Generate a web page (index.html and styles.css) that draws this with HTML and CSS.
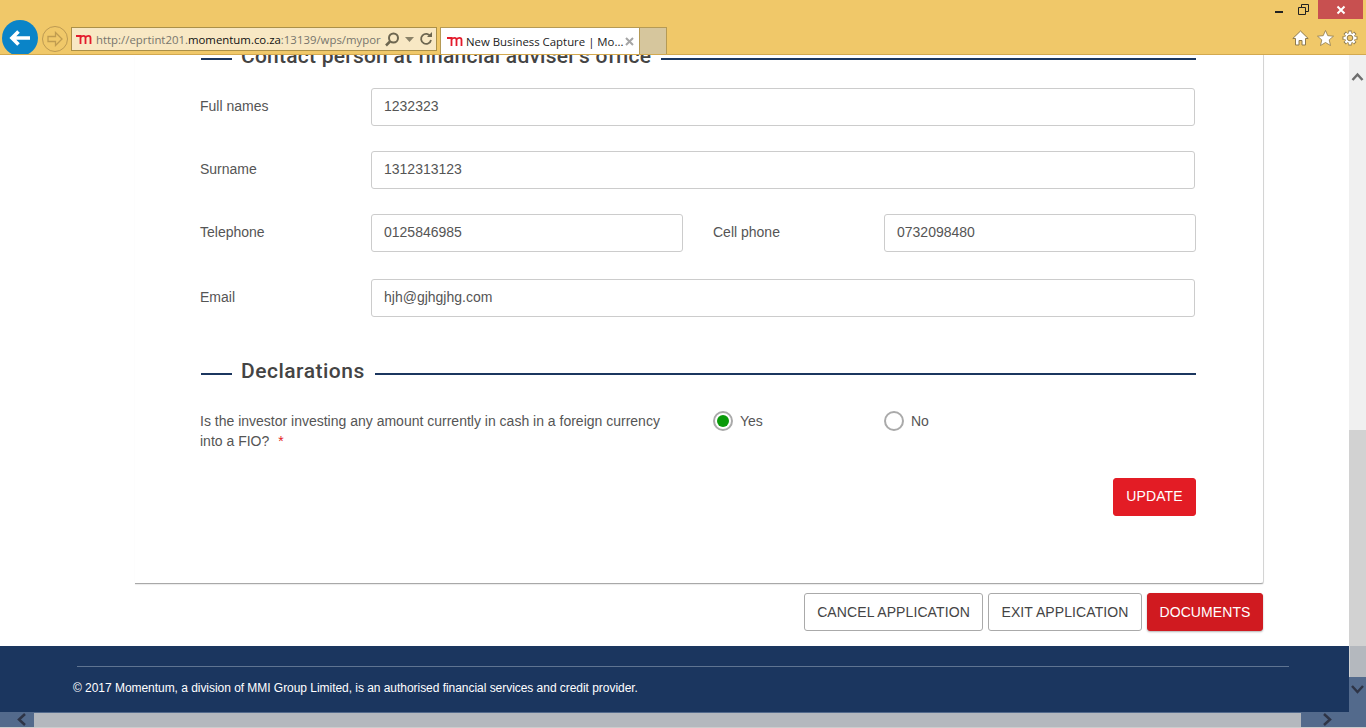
FILE: index.html
```html
<!DOCTYPE html>
<html lang="en">
<head>
<meta charset="utf-8">
<title>New Business Capture | Momentum</title>
<link rel="stylesheet" href="styles.css">
</head>
<body>
<div class="window">
  <header class="chrome">
    <div class="win-controls">
      <span class="win-btn"><svg width="10" height="10" viewBox="0 0 10 10"><rect x="1" y="6" width="8" height="2" fill="#222"/></svg></span>
      <span class="win-btn"><svg width="11" height="11" viewBox="0 0 11 11"><path d="M.5 3.500h7v7h-7zM3.500 3V.5h7v7H8" fill="none" stroke="#222"/></svg></span>
      <span class="win-close"><svg width="10" height="10" viewBox="0 0 10 10"><path d="M1.500 1.500l7 7M8.500 1.500l-7 7" stroke="#fff" stroke-width="2"/></svg></span>
    </div>
    <div class="nav-row">
      <span class="back"><svg width="22" height="16" viewBox="0 0 22 16"><path d="M9.500 1.500L3 8l6.500 6.500M3 8h18" fill="none" stroke="#fff" stroke-width="3.600"/></svg></span>
      <span class="forward"><svg width="18" height="16" viewBox="0 0 18 16"><path d="M9.500 1.500l6.500 6.500-6.500 6.500v-4H2v-5h7.500z" fill="none" stroke="#c09c50" stroke-width="1.300"/></svg></span>
      <div class="address">
        <svg class="logo" width="16" height="10" viewBox="0 0 16 10"><path d="M0 2h4.500v8M4.500 3.500C6 1.500 9.500 1 9.500 4v6M9.500 3.500C11 1.500 14.500 1 14.500 4v6" fill="none" stroke="#e31b2c" stroke-width="1.800"/></svg>
        <span class="url">http://eprtint201.<b>momentum.co.za</b>:13139/wps/mypor</span>
        <svg class="addr-icon" width="15" height="15" viewBox="0 0 15 15"><circle cx="8.500" cy="6" r="4.500" fill="none" stroke="#6d6650" stroke-width="2"/><path d="M5 9.500L1 13.500" stroke="#6d6650" stroke-width="2.500"/></svg>
        <svg class="addr-caret" width="9" height="5" viewBox="0 0 9 5"><path d="M0 0h9L4.500 5z" fill="#8a8268"/></svg>
        <svg class="addr-refresh" width="14" height="14" viewBox="0 0 14 14"><path d="M11.500 4.500A5 5 0 1 0 12 8" fill="none" stroke="#6d6650" stroke-width="1.800"/><path d="M8 5h5V0z" fill="#6d6650"/></svg>
      </div>
      <div class="tab">
        <svg class="logo" width="16" height="10" viewBox="0 0 16 10"><path d="M0 2h4.500v8M4.500 3.500C6 1.500 9.500 1 9.500 4v6M9.500 3.500C11 1.500 14.500 1 14.500 4v6" fill="none" stroke="#e31b2c" stroke-width="1.800"/></svg>
        <span class="tab-title">New Business Capture | Mo...</span>
        <svg width="9" height="9" viewBox="0 0 9 9"><path d="M1 1l7 7M8 1L1 8" stroke="#a5a5a5" stroke-width="2"/></svg>
      </div>
      <div class="new-tab"></div>
      <div class="tools">
        <svg width="17" height="16" viewBox="0 0 17 16"><path d="M8.500 1L.8 8.500H3.500V15h3.500v-4.500h3V15h3.500V8.500h2.700z" fill="#fff" stroke="#8d7a4e"/></svg>
        <svg width="17" height="16" viewBox="0 0 17 16"><path d="M8.500 .5l2.300 5.200 5.700.5-4.300 3.700 1.300 5.600-5-3-5 3 1.300-5.600L.5 6.200l5.700-.5z" fill="#fff" stroke="#8d7a4e" stroke-width=".8"/></svg>
        <svg width="16" height="16" viewBox="0 0 16 16"><path d="M8 .5v15M.5 8h15M2.700 2.700l10.600 10.600M13.300 2.700L2.700 13.300" stroke="#8d7a4e" stroke-width="3.400"/><circle cx="8" cy="8" r="5.500" fill="#8d7a4e"/><path d="M8 1.500v13M1.500 8h13M3.400 3.400l9.200 9.200M12.600 3.400l-9.200 9.200" stroke="#fff" stroke-width="2.400"/><circle cx="8" cy="8" r="4.800" fill="#fff"/><circle cx="8" cy="8" r="2.800" fill="#f0c869" stroke="#8d7a4e"/></svg>
      </div>
    </div>
  </header>

  <div class="viewport">
    <div class="page">
      <main class="page-main">
        <section class="card">
          <h2 class="section-title section-title-long"><span>Contact person at financial adviser's office</span></h2>
          <div class="form-grid">
            <label class="field-label">Full names</label>
            <input class="text-input span-all" value="1232323">
            <label class="field-label">Surname</label>
            <input class="text-input span-all" value="1312313123">
            <label class="field-label">Telephone</label>
            <input class="text-input" value="0125846985">
            <label class="field-label col-second">Cell phone</label>
            <input class="text-input" value="0732098480">
            <label class="field-label field-label-email">Email</label>
            <input class="text-input span-all field-email" value="hjh@gjhgjhg.com">
          </div>
          <h2 class="section-title declarations"><span>Declarations</span></h2>
          <div class="question">
            <p class="question-text">Is the investor investing any amount currently in cash in a foreign currency into a FIO? <span class="req">*</span></p>
            <div class="option"><span class="radio checked"></span><span>Yes</span></div>
            <div class="option"><span class="radio"></span><span>No</span></div>
          </div>
          <div class="update-row"><button class="btn btn-update">UPDATE</button></div>
        </section>
        <div class="actions">
          <button class="btn btn-outline btn-cancel">CANCEL APPLICATION</button>
          <button class="btn btn-outline btn-exit">EXIT APPLICATION</button>
          <button class="btn btn-docs">DOCUMENTS</button>
        </div>
      </main>
      <footer class="footer">
        <div class="footer-rule"></div>
        <p class="footer-text">© 2017 Momentum, a division of MMI Group Limited, is an authorised financial services and credit provider.</p>
      </footer>
    </div>
    <div class="vscroll">
      <div class="v-top"><svg width="13" height="9" viewBox="0 0 13 9"><path d="M1.500 8l5-5.500 5 5.500" fill="none" stroke="#6e6e6e" stroke-width="2.500"/></svg></div>
      <div class="v-track"></div>
      <div class="v-thumb"></div>
      <div class="v-bottom"><svg width="13" height="9" viewBox="0 0 13 9"><path d="M1 1l5.500 6L12 1" fill="none" stroke="#2e3446" stroke-width="2.500"/></svg></div>
    </div>
  </div>

  <div class="hscroll">
    <div class="h-left"><svg width="9" height="13" viewBox="0 0 9 13"><path d="M8 1L2 6.500 8 12" fill="none" stroke="#2e3446" stroke-width="2.500"/></svg></div>
    <div class="h-track"></div>
    <div class="h-right"><svg width="9" height="13" viewBox="0 0 9 13"><path d="M1 1l6 5.500L1 12" fill="none" stroke="#2e3446" stroke-width="2.500"/></svg></div>
  </div>
</div>
</body>
</html>
```
FILE: styles.css
```css
* { box-sizing: border-box; }
html, body { margin: 0; padding: 0; }
body { font-family: "Liberation Sans", Arial, sans-serif; font-size: 14px; color: #555; background: #fff; overflow: hidden; }
.window { width: 1366px; height: 728px; display: flex; flex-direction: column; overflow: hidden; }

/* browser chrome */
.chrome { height: 55px; flex: none; background: #f0c869; border-bottom: 1px solid #d3a94f; overflow: hidden; }
.win-controls { height: 19px; display: flex; justify-content: flex-end; padding-right: 3px; }
.win-btn { width: 25px; height: 19px; display: flex; align-items: center; justify-content: center; }
.win-close { width: 45px; height: 19px; margin-left: 2px; background: #c85050; display: flex; align-items: center; justify-content: center; }
.nav-row { display: flex; align-items: flex-start; height: 35px; padding-left: 2px; }
.back { width: 36px; height: 36px; margin-top: 1px; border-radius: 50%; background: #0a84c8; display: flex; align-items: center; justify-content: center; flex: none; }
.forward { width: 26px; height: 26px; margin: 7px 0 0 4px; border-radius: 50%; border: 1px solid #bd9a52; display: flex; align-items: center; justify-content: center; flex: none; }
.address { width: 366px; height: 24px; margin: 8px 0 0 3px; background: #f8e8c4; border: 1px solid #ab9048; display: flex; align-items: center; padding-left: 4px; flex: none; }
.logo { flex: none; }
.url { font-family: "Open Sans", sans-serif; font-size: 11.4px; color: #77756c; margin-left: 4px; width: 286px; white-space: nowrap; overflow: hidden; flex: none; }
.url b { font-weight: 400; color: #111; }
.addr-icon { flex: none; margin-left: 3px; }
.addr-caret { flex: none; margin: 0 5px; }
.addr-refresh { flex: none; }
.tab { width: 200px; height: 27px; margin: 8px 0 0 3px; background: #fff; border: 1px solid #b59a55; border-bottom: 0; display: flex; align-items: center; padding: 0 5px 0 6px; flex: none; }
.tab-title { font-family: "Open Sans", sans-serif; font-size: 11.4px; color: #222; margin: 0 7px 0 3px; white-space: nowrap; width: 152px; flex: none; }
.new-tab { width: 27px; height: 27px; margin-top: 8px; background: #d6c69d; border: 1px solid #b59a55; border-left: 0; border-bottom: 0; flex: none; }
.tools { margin-left: auto; margin-top: 11px; padding-right: 8px; display: flex; gap: 8px; align-items: center; }

/* viewport */
.viewport { height: 657px; flex: none; display: flex; }
.page { width: 1349px; flex: none; display: flex; flex-direction: column; }
.page-main { height: 591px; flex: none; padding-left: 135px; overflow: hidden; }
.card { display: flow-root; width: 1129px; height: 529px; padding: 0 67px 0 65px; background: #fff; border-right: 1px solid #d4d4d4; border-bottom: 1px solid #a8a8a8; border-bottom-right-radius: 3px; box-shadow: 0 1px 1px rgba(0,0,0,.08); }

.section-title { margin: -8px 0 0 1px; height: 24px; display: flex; align-items: center; font-family: Roboto, sans-serif; font-size: 21px; font-weight: 500; color: #444; line-height: 24px; }
.section-title::before { content: ""; width: 31px; height: 2px; background: #1b365f; margin-right: 9px; flex: none; }
.section-title::after { content: ""; flex: 1; height: 2px; background: #1b365f; margin-left: 10px; }
.section-title span { letter-spacing: .5px; white-space: nowrap; margin-bottom: 6px; }
.section-title-long span { letter-spacing: .24px; }
.declarations { margin-top: 45px; }

.form-grid { margin-top: 17px; display: grid; grid-template-columns: 171px 312px 30px 171px 1fr; row-gap: 25px; align-items: center; }
.field-label { font-size: 14px; color: #555; margin-bottom: 2px; }
.col-second { grid-column: 3 / span 2; padding-left: 30px; }
.text-input { width: 100%; height: 38px; border: 1px solid #ccc; border-radius: 3px; padding: 0 12px 2px; font: 14px "Liberation Sans", Arial, sans-serif; color: #555; background: #fff; outline: none; }
.span-all { grid-column: 2 / -1; width: calc(100% - 1px); }
.field-label-email { margin-top: 2px; }
.field-email { margin-top: 2px; }

.question { margin-top: 25px; display: grid; grid-template-columns: 513px 171px 1fr; align-items: start; }
.question-text { margin: 0; width: 480px; line-height: 20px; color: #555; }
.req { color: #e31c25; margin-left: 5px; }
.option { display: flex; align-items: center; gap: 7px; height: 20px; }
.radio { width: 20px; height: 20px; border-radius: 50%; border: 2px solid #aaa; background: #fff; flex: none; display: flex; align-items: center; justify-content: center; }
.radio.checked::after { content: ""; width: 12px; height: 12px; border-radius: 50%; background: #0a9a0a; }

.update-row { margin-top: 27px; display: flex; justify-content: flex-end; }
.btn { height: 38px; border-radius: 3px; font: 14px "Liberation Sans", Arial, sans-serif; padding: 0; cursor: pointer; flex: none; letter-spacing: .1px; }
.btn-update { width: 83px; padding-bottom: 2px; background: #e31c25; border: 1px solid #e31c25; color: #fff; }
.actions { width: 1128px; margin-top: 9px; display: flex; justify-content: flex-end; gap: 5px; }
.btn-outline { background: #fff; border: 1px solid #aaa; color: #444; }
.btn-cancel { width: 179px; }
.btn-exit { width: 154px; }
.btn-docs { width: 116px; background: #d01a20; border: 1px solid #d01a20; color: #fff; box-shadow: 0 1px 2px rgba(0,0,0,.3); }

/* footer */
.footer { height: 66px; flex: none; background: #1b365f; padding: 20px 60px 0 73px; }
.footer-rule { height: 1px; background: #5f7491; margin-left: 4px; }
.footer-text { margin: 14px 0 0; font-size: 12px; line-height: 14px; color: #fff; white-space: nowrap; letter-spacing: -.04px; }

/* scrollbars */
.vscroll { width: 17px; flex: none; display: flex; flex-direction: column; background: #f0f0f0; }
.v-top { height: 375px; background: #f0f0f0; display: flex; justify-content: center; padding-top: 17px; }
.v-track { height: 216px; background: #d2d2d2; }
.v-thumb { height: 31px; background: #b4b8be; border-left: 1px solid #d2d2d2; }
.v-bottom { height: 35px; background: #536a8c; display: flex; justify-content: center; padding-top: 8px; }
.hscroll { height: 16px; flex: none; display: flex; background: #b4b8be; border-bottom: 1px solid #ccc; }
.h-left { width: 34px; background: #536a8c; display: flex; align-items: center; padding-left: 17px; }
.h-track { flex: 1; border-top: 1px solid #536a8c; }
.h-right { width: 65px; background: #536a8c; display: flex; align-items: center; padding-left: 22px; }
```
